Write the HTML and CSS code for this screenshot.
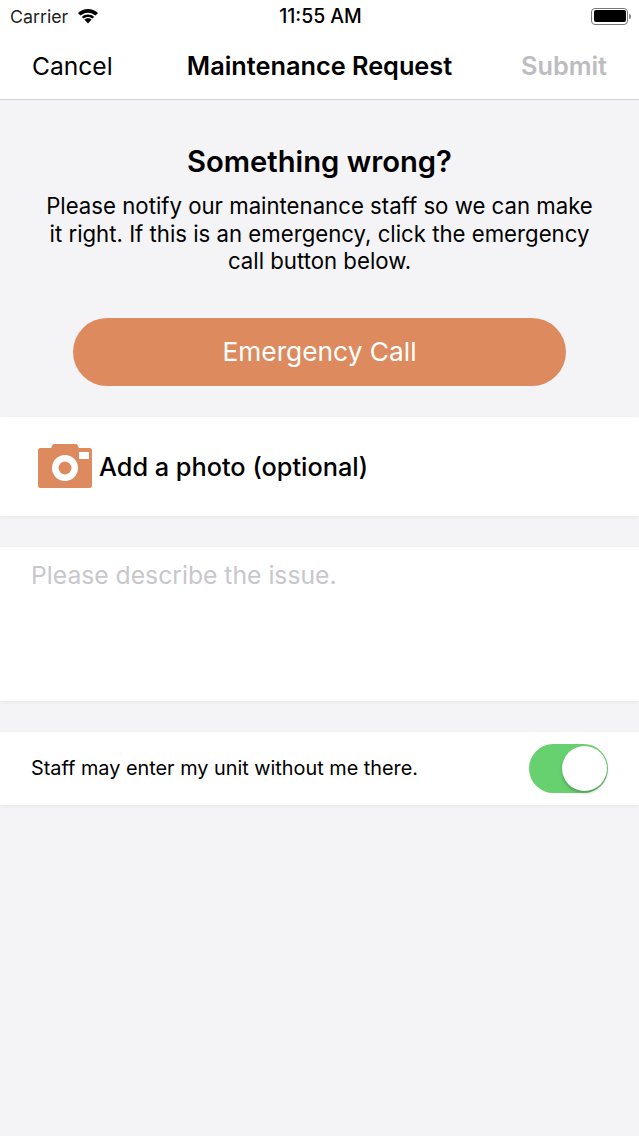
FILE: index.html
```html
<!DOCTYPE html>
<html lang="en">
<head>
    <meta charset="UTF-8">
    <meta name="viewport" content="width=device-width, initial-scale=1.0">
    <title>Maintenance Request</title>
    <link rel="stylesheet" href="styles.css">
</head>
<body>
    <div class="top">
        <div class="status">
            <div class="status-left">
                <span class="carrier">Carrier</span>
                <svg class="wifi" width="22" height="16" viewBox="0 0 22 16">
                    <path d="M11 15.5 L7.4 11.6 C9.5 9.7 12.5 9.7 14.6 11.6 Z" fill="#000"/>
                    <path d="M4.9 8.9 L6.5 10.6 C9 8.3 13 8.3 15.5 10.6 L17.1 8.9 C13.7 5.8 8.3 5.8 4.9 8.9 Z" fill="#000"/>
                    <path d="M1 5 L3.4 7.6 C7.7 3.7 14.3 3.7 18.6 7.6 L21 5 C15.3 -0.2 6.7 -0.2 1 5 Z" fill="#000"/>
                </svg>
            </div>
            <span class="clock">11:55 AM</span>
            <div class="battery">
                <div class="battery-body"><div class="battery-fill"></div></div>
                <div class="battery-tip"></div>
            </div>
        </div>
        <div class="nav">
            <span class="nav-cancel">Cancel</span>
            <span class="nav-title">Maintenance Request</span>
            <span class="nav-submit">Submit</span>
        </div>
    </div>

    <div class="intro">
        <h1>Something wrong?</h1>
        <p>Please notify our maintenance staff so we can make it right. If this is an emergency, click the emergency call button below.</p>
        <div class="call-btn">Emergency Call</div>
    </div>

    <div class="card photo-card">
        <svg class="camera" width="54" height="44" viewBox="0 0 54 44">
            <path d="M2.500 4 H13 L14.500 1 Q15 0 16 0 H38 Q39 0 39.500 1 L41 4 H51.500 Q54 4 54 6.500 V41.500 Q54 44 51.500 44 H2.500 Q0 44 0 41.500 V6.500 Q0 4 2.500 4 Z" fill="#dd8b5e"/>
            <circle cx="27" cy="24" r="13" fill="#fff"/>
            <circle cx="27" cy="24" r="6.500" fill="#dd8b5e"/>
            <rect x="41" y="8" width="10" height="7" fill="#fff"/>
        </svg>
        <span class="photo-label">Add a photo (optional)</span>
    </div>

    <div class="card desc-card">
        <span class="placeholder">Please describe the issue.</span>
    </div>

    <div class="card toggle-card">
        <span class="toggle-label">Staff may enter my unit without me there.</span>
        <div class="switch"><div class="knob"></div></div>
    </div>
</body>
</html>
```

FILE: styles.css
```css
html, body {
    margin: 0;
    padding: 0;
}

body {
    width: 639px;
    height: 1136px;
    overflow: hidden;
    background-color: #f4f4f6;
    font-family: Inter, "Noto Sans", sans-serif;
    color: #000;
}

.top {
    background-color: #fff;
    border-bottom: 1px solid #d2d2d4;
    height: 99px;
}

.status {
    height: 32px;
    display: flex;
    align-items: center;
    justify-content: space-between;
    padding: 0 8px 0 10px;
    position: relative;
}

.status-left {
    display: flex;
    align-items: center;
    gap: 9px;
}

.carrier {
    font-size: 17.800px;
    color: #222;
}

.clock {
    font-size: 19.400px;
    font-weight: 500;
    position: absolute;
    left: 2px;
    right: 0;
    text-align: center;
}

.battery {
    display: flex;
    align-items: center;
}

.battery-body {
    width: 32px;
    height: 12px;
    border: 1px solid #777;
    border-radius: 4px;
    padding: 1.500px;
}

.battery-fill {
    width: 100%;
    height: 100%;
    background-color: #000;
    border-radius: 2px;
}

.battery-tip {
    width: 2px;
    height: 5px;
    background-color: #888;
    margin-left: 1px;
    border-radius: 0 2px 2px 0;
}

.nav {
    height: 67px;
    display: flex;
    align-items: center;
    justify-content: space-between;
    padding: 0 32px;
    position: relative;
    font-size: 25.300px;
}

.nav-cancel {
    font-size: 24.600px;
}

.nav-title {
    font-weight: 600;
    position: absolute;
    left: 0;
    right: 0;
    text-align: center;
}

.nav-submit {
    color: #bdbdc0;
    font-weight: 600;
}

.intro {
    text-align: center;
    padding: 44px 40px 31px;
}

h1 {
    margin: 0;
    font-size: 29.200px;
    font-weight: 600;
    line-height: 36px;
}

p {
    margin: 12px 0 0;
    font-size: 22.200px;
    line-height: 27.500px;
}

.call-btn {
    width: 493px;
    height: 68px;
    margin: 43px auto 0;
    border-radius: 34px;
    background-color: #dd8b5e;
    color: #fff;
    font-size: 26.300px;
    line-height: 68px;
}

.card {
    background-color: #fff;
    box-shadow: 0 1px 4px rgba(0, 0, 0, 0.05);
}

.photo-card {
    height: 99px;
    display: flex;
    align-items: center;
    padding-left: 38px;
    gap: 7px;
}

.photo-label {
    font-size: 25.300px;
    font-weight: 500;
}

.desc-card {
    margin-top: 31px;
    height: 154px;
    padding: 12px 31px;
    box-sizing: border-box;
}

.placeholder {
    font-size: 24.700px;
    line-height: 32px;
    color: #c7c7cd;
}

.toggle-card {
    margin-top: 31px;
    height: 73px;
    display: flex;
    align-items: center;
    justify-content: space-between;
    padding: 0 31px;
}

.toggle-label {
    font-size: 19.850px;
}

.switch {
    width: 79px;
    height: 49px;
    border-radius: 25px;
    background-color: #67d06f;
    display: flex;
    justify-content: flex-end;
    align-items: center;
    padding: 0 1px;
    box-sizing: border-box;
}

.knob {
    width: 45px;
    height: 45px;
    border-radius: 50%;
    background-color: #fff;
    box-shadow: 0 2px 3px rgba(0, 0, 0, 0.25);
}
```
